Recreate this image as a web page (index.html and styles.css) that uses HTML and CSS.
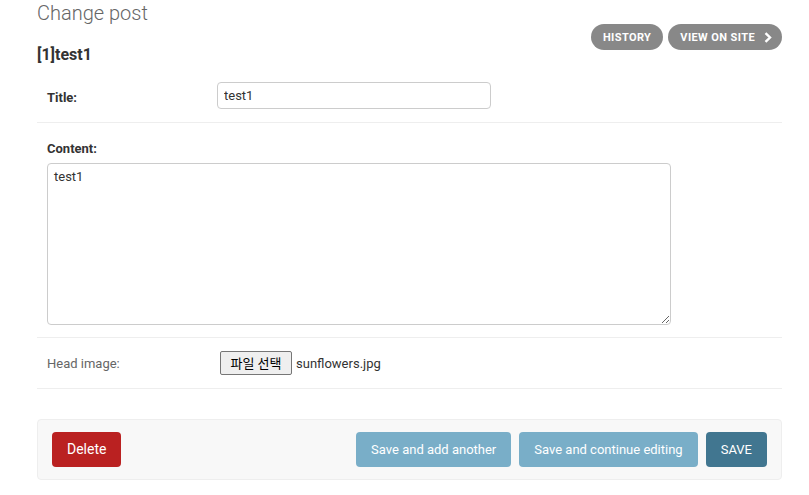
FILE: index.html
```html
<!DOCTYPE html>
<html lang="en">
<head>
    <meta charset="UTF-8">
    <title>Change post</title>
    <link rel="stylesheet" href="styles.css">
</head>
<body>
    <div class="content">
        <h1 class="pageTitle">Change post</h1>
        <div class="objectHead">
            <h2 class="objectName">[1]test1</h2>
            <ul class="objectTools">
                <li><a href="" class="toolLink">History</a></li>
                <li>
                    <a href="" class="toolLink viewSite">View on site
                        <svg class="arrow" width="8" height="11" viewBox="0 0 8 11"><path d="M1.5 1.2 L6 5.5 L1.5 9.8" fill="none" stroke="#fff" stroke-width="2.4"/></svg>
                    </a>
                </li>
            </ul>
        </div>

        <form class="changeForm">
            <fieldset class="module">
                <div class="formRow">
                    <label class="required" for="id_title">Title:</label>
                    <input class="vText" type="text" id="id_title" value="test1">
                </div>
                <div class="formRow stacked">
                    <label class="required" for="id_content">Content:</label>
                    <textarea class="vLarge" id="id_content">test1</textarea>
                </div>
                <div class="formRow fileRow">
                    <label class="optional">Head image:</label>
                    <div class="fileBox">
                        <span class="fileBtn">파일 선택</span>
                        <span class="fileName">sunflowers.jpg</span>
                    </div>
                </div>
            </fieldset>

            <div class="submitRow">
                <a href="" class="deleteLink">Delete</a>
                <div class="saveBtns">
                    <span class="btn">Save and add another</span>
                    <span class="btn">Save and continue editing</span>
                    <span class="btn default">SAVE</span>
                </div>
            </div>
        </form>
    </div>
</body>
</html>
```

FILE: styles.css
```css
*{
    padding: 0;
    margin: 0;
    box-sizing: border-box;
}
ul{
    list-style: none;
}
body{
    font-family: Roboto, "Liberation Sans", sans-serif;
    color: #333;
    background: #fff;
}
.content{
    padding: 0 27px 0 37px;
}
.pageTitle{
    margin-top: 1px;
    font-size: 20px;
    line-height: 24px;
    font-weight: 300;
    color: #666;
}
.objectHead{
    display: flex;
    justify-content: space-between;
    align-items: flex-start;
}
.objectName{
    margin-top: 20px;
    font-size: 16px;
    line-height: 20px;
    font-weight: 700;
    color: #333;
}
.objectTools{
    display: flex;
    gap: 5px;
    margin-top: -1px;
}
.toolLink{
    display: flex;
    align-items: center;
    height: 26px;
    padding: 0 12px;
    background-color: #888;
    color: #fff;
    font-size: 11px;
    font-weight: 700;
    letter-spacing: 0.4px;
    text-transform: uppercase;
    text-decoration: none;
    border-radius: 15px;
}
.viewSite{
    padding-right: 10px;
}
.arrow{
    margin-left: 9px;
}
.module{
    border: none;
    margin-top: 7px;
}
.formRow{
    display: flex;
    padding: 10px 10px 13px;
    border-bottom: 1px solid #eee;
    font-size: 13px;
}
.formRow label{
    width: 170px;
    padding: 9px 10px 0 0;
    line-height: 13px;
    color: #666;
}
.formRow label.required{
    font-weight: 700;
    color: #333;
}
.stacked{
    flex-direction: column;
    padding-bottom: 12px;
}
.stacked label{
    margin-bottom: 8px;
}
.fileRow{
    padding-bottom: 10px;
}
.vText{
    width: 274px;
    height: 27px;
    padding: 5px 6px;
    border: 1px solid #ccc;
    border-radius: 4px;
    font-family: Roboto, sans-serif;
    font-size: 13px;
    color: #333;
}
.vLarge{
    display: block;
    width: 624px;
    height: 162px;
    padding: 5px 6px;
    border: 1px solid #ccc;
    border-radius: 4px;
    font-family: Roboto, sans-serif;
    font-size: 13px;
    line-height: 16px;
    color: #333;
}
.fileBox{
    display: flex;
    align-items: center;
    height: 30px;
    margin-left: 3px;
}
.fileBtn{
    display: inline-block;
    width: 72px;
    height: 24px;
    line-height: 22px;
    text-align: center;
    background-color: #efefef;
    border: 1px solid #767676;
    border-radius: 2px;
    font-family: "Noto Sans CJK KR", sans-serif;
    font-size: 13px;
    color: #000;
}
.fileName{
    margin-left: 4px;
    font-size: 13px;
    color: #333;
}
.submitRow{
    display: flex;
    justify-content: space-between;
    margin-top: 30px;
    padding: 12px 14px;
    background-color: #f8f8f8;
    border: 1px solid #eee;
    border-radius: 4px;
}
.deleteLink{
    display: block;
    height: 35px;
    line-height: 35px;
    padding: 0 15px;
    background-color: #ba2121;
    color: #fff;
    font-size: 14px;
    text-decoration: none;
    border-radius: 4px;
}
.saveBtns{
    display: flex;
    gap: 8px;
}
.btn{
    display: block;
    height: 35px;
    line-height: 35px;
    padding: 0 15px;
    background-color: #79aec8;
    color: #fff;
    font-size: 13px;
    border-radius: 4px;
}
.btn.default{
    background-color: #417690;
}
```
